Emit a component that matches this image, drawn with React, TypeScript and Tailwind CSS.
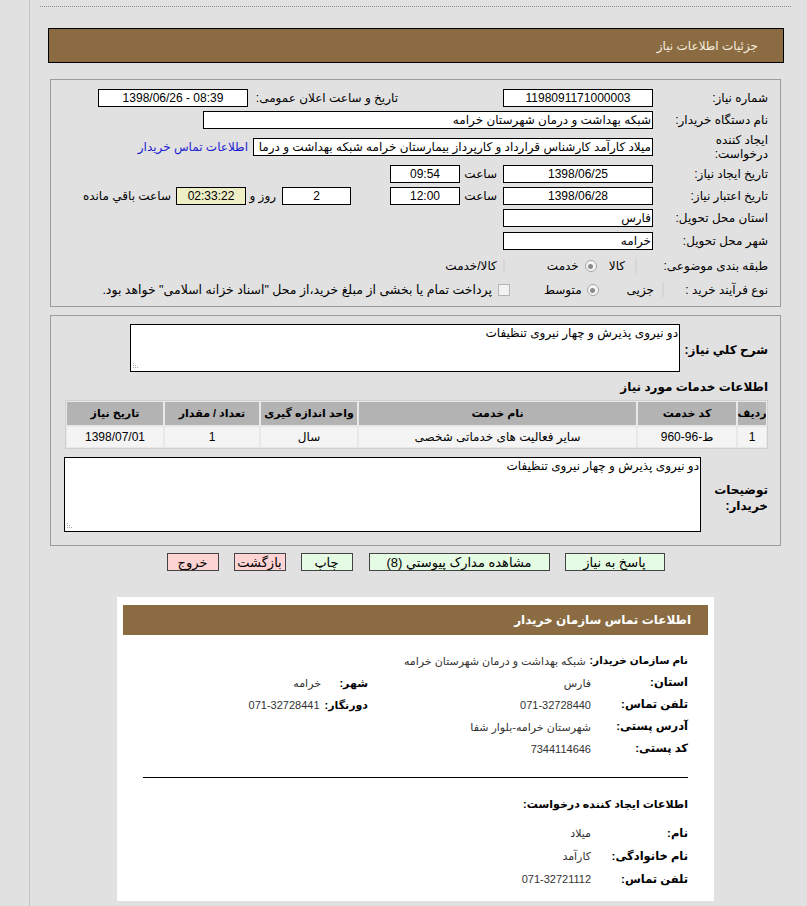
import React from "react";

function Radio({ checked }: { checked?: boolean }) {
  return checked ? (
    <span className="w-[12px] h-[12px] rounded-full border border-[#a6a6a6] bg-[#f4f4f4] flex items-center justify-center shrink-0">
      <span className="w-[5px] h-[5px] rounded-full bg-[#8c8c8c]" />
    </span>
  ) : (
    <span className="w-[12px] h-[12px] rounded-full border border-[#d6d6d6] bg-[#ececec] shrink-0" />
  );
}

function Grip() {
  return (
    <svg className="absolute left-[2px] bottom-[2px]" width="6" height="6" viewBox="0 0 6 6">
      <rect x="0" y="4" width="1" height="1" fill="#aaa" />
      <rect x="2" y="4" width="1" height="1" fill="#aaa" />
      <rect x="4" y="4" width="1" height="1" fill="#aaa" />
      <rect x="0" y="2" width="1" height="1" fill="#aaa" />
      <rect x="2" y="2" width="1" height="1" fill="#aaa" />
      <rect x="0" y="0" width="1" height="1" fill="#aaa" />
    </svg>
  );
}

function CardRow({ label, value, label2, value2, small }: { label: string; value: string; label2?: string; value2?: string; small?: boolean }) {
  return (
    <div className="flex items-center h-[22px]">
      <div className={small ? "min-w-[97px] shrink-0 font-bold text-[10.5px] whitespace-nowrap pl-[4px]" : "min-w-[97px] shrink-0 font-bold text-[11.5px] whitespace-nowrap pl-[4px]"}>{label}</div>
      <div className="w-[223px] shrink-0 text-[11px] text-[#333] whitespace-nowrap">{value}</div>
      {label2 && <div className="min-w-[47px] shrink-0 font-bold text-[11px] whitespace-nowrap pl-[5px]">{label2}</div>}
      {value2 && <div className="text-[11px] text-[#333] whitespace-nowrap">{value2}</div>}
    </div>
  );
}

export default function App() {
  return (
    <div className="w-[807px] min-h-[906px] bg-[#e1e1e1] text-[12px] text-black font-['Liberation_Sans','DejaVu_Sans',sans-serif] overflow-hidden">
      <div className="ml-[29px] min-h-[906px] border-l border-[#c4c4c4] pt-[6px]">
        <div className="ml-[10px] mr-[16px] border-t border-dotted border-[#8c8c8c]" />

        {/* title bar */}
        <div dir="rtl" className="ml-[18px] w-[736px] mt-[21px] h-[35px] border border-black bg-[#8b6c42] flex items-center pr-[25px] text-[#f3ecdd] text-[12px]">
          جزئیات اطلاعات نیاز
        </div>

        {/* panel 1 */}
        <div dir="rtl" className="ml-[20px] w-[731px] mt-[16px] border border-[#9c9c9c] pt-[9px] pr-[12px] pb-[7px]">
          <div className="flex items-center h-[18px]">
            <div className="w-[115px] shrink-0">شماره نیاز:</div>
            <div className="w-[150px] h-[18px] shrink-0 border border-black bg-white text-center leading-[16px]">1198091171000003</div>
            <div className="w-[150px] mr-[105px] shrink-0">تاریخ و ساعت اعلان عمومی:</div>
            <div dir="ltr" className="w-[150px] h-[18px] shrink-0 border border-black bg-white text-center leading-[16px]">1398/06/26 - 08:39</div>
          </div>
          <div className="flex items-center h-[18px] mt-[4px]">
            <div className="w-[115px] shrink-0">نام دستگاه خریدار:</div>
            <div className="w-[450px] h-[18px] shrink-0 border border-black bg-white text-right pr-[1px] leading-[16px]">شبکه بهداشت و درمان شهرستان خرامه</div>
          </div>
          <div className="flex items-center h-[28px] mt-[4px]">
            <div className="w-[115px] shrink-0 leading-[14px]">
              ایجاد کننده
              <br />
              درخواست:
            </div>
            <div className="w-[400px] h-[18px] shrink-0 border border-black bg-white text-right pr-[1px] leading-[16px] overflow-hidden whitespace-nowrap">
              میلاد کارآمد کارشناس قرارداد و کارپرداز بیمارستان خرامه شبکه بهداشت و درما
            </div>
            <div className="mr-[5px] text-[#1c1cd1] whitespace-nowrap">اطلاعات تماس خریدار</div>
          </div>
          <div className="flex items-center h-[18px] mt-[4px]">
            <div className="w-[115px] shrink-0">تاریخ ایجاد نیاز:</div>
            <div className="w-[150px] h-[18px] shrink-0 border border-black bg-white text-center leading-[16px]">1398/06/25</div>
            <div className="w-[43px] shrink-0 pr-[6px]">ساعت</div>
            <div className="w-[70px] h-[18px] shrink-0 border border-black bg-white text-center leading-[16px]">09:54</div>
          </div>
          <div className="flex items-center h-[18px] mt-[4px]">
            <div className="w-[115px] shrink-0">تاریخ اعتبار نیاز:</div>
            <div className="w-[150px] h-[18px] shrink-0 border border-black bg-white text-center leading-[16px]">1398/06/28</div>
            <div className="w-[43px] shrink-0 pr-[6px]">ساعت</div>
            <div className="w-[70px] h-[18px] shrink-0 border border-black bg-white text-center leading-[16px]">12:00</div>
            <div className="w-[69px] mr-[39px] h-[18px] shrink-0 border border-black bg-white text-center leading-[16px]">2</div>
            <div className="w-[36px] shrink-0 pr-[6px] whitespace-nowrap">روز و</div>
            <div className="w-[70px] h-[18px] shrink-0 border border-black bg-[#efefc6] text-center leading-[16px]">02:33:22</div>
            <div className="mr-[5px] whitespace-nowrap">ساعت باقي مانده</div>
          </div>
          <div className="flex items-center h-[18px] mt-[4px]">
            <div className="w-[115px] shrink-0">استان محل تحویل:</div>
            <div className="w-[150px] h-[18px] shrink-0 border border-black bg-white text-right pr-[1px] leading-[16px]">فارس</div>
          </div>
          <div className="flex items-center h-[18px] mt-[5px]">
            <div className="w-[115px] shrink-0">شهر محل تحویل:</div>
            <div className="w-[150px] h-[18px] shrink-0 border border-black bg-white text-right pr-[1px] leading-[16px]">خرامه</div>
          </div>
          <div className="flex items-center h-[18px] mt-[7px]">
            <div className="w-[115px] shrink-0">طبقه بندی موضوعی:</div>
            <div className="mr-[16px]"><Radio /></div>
            <div className="mr-[10px]">كالا</div>
            <div className="mr-[12px]"><Radio checked /></div>
            <div className="mr-[6px]">خدمت</div>
            <div className="mr-[42px]"><Radio /></div>
            <div className="mr-[6px]">كالا/خدمت</div>
          </div>
          <div className="flex items-center h-[18px] mt-[6px]">
            <div className="w-[104px] shrink-0 whitespace-nowrap">نوع فرآیند خرید :</div>
            <div><Radio /></div>
            <div className="mr-[8px]">جزیی</div>
            <div className="mr-[28px]"><Radio checked /></div>
            <div className="mr-[5px]">متوسط</div>
            <div className="mr-[34px] w-[12px] h-[12px] border border-[#b4b4b4] bg-[#f2f2f2] shrink-0" />
            <div className="mr-[6px] whitespace-nowrap text-[12.5px]">پرداخت تمام یا بخشی از مبلغ خرید،از محل "اسناد خزانه اسلامی" خواهد بود.</div>
          </div>
        </div>

        {/* panel 2 */}
        <div dir="rtl" className="ml-[20px] w-[731px] mt-[8px] border border-[#9c9c9c] pt-[8px] pr-[12px] pb-[13px]">
          <div className="flex items-center">
            <div className="w-[88px] shrink-0 font-bold text-[12px] whitespace-nowrap pt-[4px]">شرح کلي نیاز:</div>
            <div className="relative w-[550px] h-[48px] shrink-0 border border-black bg-white text-right pr-[1px] pt-[1px] leading-[14px]">
              دو نیروی پذیرش و چهار نیروی تنظیفات
              <Grip />
            </div>
          </div>
          <div className="mt-[7px] font-bold text-[12px] leading-[16px]">اطلاعات خدمات مورد نیاز</div>
          <div className="mt-[5px] w-[703px] border border-[#cfcfcf] p-[1px] bg-[#e8e8e8]">
            <div className="grid grid-cols-[28px_98px_277px_96px_94px_1fr] gap-[2px]">
              <div className="h-[23px] bg-[#b3b3b3] flex items-center justify-center font-bold text-[11px] overflow-hidden whitespace-nowrap">ردیف</div>
              <div className="h-[23px] bg-[#b3b3b3] flex items-center justify-center font-bold text-[11px]">کد خدمت</div>
              <div className="h-[23px] bg-[#b3b3b3] flex items-center justify-center font-bold text-[11px]">نام خدمت</div>
              <div className="h-[23px] bg-[#b3b3b3] flex items-center justify-center font-bold text-[11px]">واحد اندازه گیری</div>
              <div className="h-[23px] bg-[#b3b3b3] flex items-center justify-center font-bold text-[11px]">تعداد / مقدار</div>
              <div className="h-[23px] bg-[#b3b3b3] flex items-center justify-center font-bold text-[11px]">تاریخ نیاز</div>
              <div className="h-[20px] bg-[#f4f4f4] flex items-center justify-center">1</div>
              <div className="h-[20px] bg-[#f4f4f4] flex items-center justify-center">ط-96-960</div>
              <div className="h-[20px] bg-[#f4f4f4] flex items-center justify-center">سایر فعالیت های خدماتی شخصی</div>
              <div className="h-[20px] bg-[#f4f4f4] flex items-center justify-center">سال</div>
              <div className="h-[20px] bg-[#f4f4f4] flex items-center justify-center">1</div>
              <div className="h-[20px] bg-[#f4f4f4] flex items-center justify-center">1398/07/01</div>
            </div>
          </div>
          <div className="flex items-center mt-[8px]">
            <div className="w-[67px] shrink-0 font-bold text-[12px] leading-[16px] pt-[6px]">
              توضیحات
              <br />
              خریدار:
            </div>
            <div className="relative w-[637px] h-[75px] shrink-0 border border-black bg-white text-right pr-[1px] pt-[1px] leading-[14px]">
              دو نیروی پذیرش و چهار نیروی تنظیفات
              <Grip />
            </div>
          </div>
        </div>

        {/* buttons */}
        <div dir="rtl" className="ml-[20px] w-[731px] mt-[7px] flex justify-center gap-[15px] text-[13px]">
          <div className="w-[100px] h-[18px] border border-[#444] bg-[#e6fbe3] flex items-center justify-center leading-none">پاسخ به نیاز</div>
          <div className="w-[181px] h-[18px] border border-[#444] bg-[#e6fbe3] flex items-center justify-center leading-none ml-[1px]">مشاهده مدارک پیوستي (8)</div>
          <div className="w-[52px] h-[18px] border border-[#444] bg-[#e6fbe3] flex items-center justify-center leading-none">چاپ</div>
          <div className="w-[52px] h-[18px] border border-[#444] bg-[#fdd3d3] flex items-center justify-center leading-none">بازگشت</div>
          <div className="w-[52px] h-[18px] border border-[#444] bg-[#fdd3d3] flex items-center justify-center leading-none">خروج</div>
        </div>

        {/* buyer contact card */}
        <div dir="rtl" className="ml-[87px] w-[597px] mt-[26px] bg-white pt-[8px] pb-[10px]">
          <div className="mx-[6px] h-[30px] bg-[#8b6c42] flex items-center pr-[17px] text-white font-bold text-[12px]">
            اطلاعات تماس سازمان خریدار
          </div>
          <div className="pr-[26px] mt-[15px]">
            <CardRow small label="نام سازمان خریدار:" value="شبکه بهداشت و درمان شهرستان خرامه" />
            <CardRow label="استان:" value="فارس" label2="شهر:" value2="خرامه" />
            <CardRow label="تلفن تماس:" value="071-32728440" label2="دورنگار:" value2="071-32728441" />
            <CardRow label="آدرس پستی:" value="شهرستان خرامه-بلوار شفا" />
            <CardRow label="کد پستی:" value="7344114646" />
          </div>
          <div className="mx-[26px] mt-[17px] border-t border-black" />
          <div className="pr-[26px] mt-[18px] font-bold text-[11px] leading-[16px] whitespace-nowrap">اطلاعات ایجاد کننده درخواست:</div>
          <div className="pr-[26px] mt-[10px]">
            <div className="flex items-center h-[23px]">
              <div className="w-[97px] shrink-0 font-bold text-[11.5px]">نام:</div>
              <div className="text-[11px] text-[#333]">میلاد</div>
            </div>
            <div className="flex items-center h-[23px]">
              <div className="w-[97px] shrink-0 font-bold text-[11.5px]">نام خانوادگی:</div>
              <div className="text-[11px] text-[#333]">کارآمد</div>
            </div>
            <div className="flex items-center h-[23px]">
              <div className="w-[97px] shrink-0 font-bold text-[11.5px]">تلفن تماس:</div>
              <div className="text-[11px] text-[#333]">071-32721112</div>
            </div>
          </div>
        </div>
      </div>
    </div>
  );
}
